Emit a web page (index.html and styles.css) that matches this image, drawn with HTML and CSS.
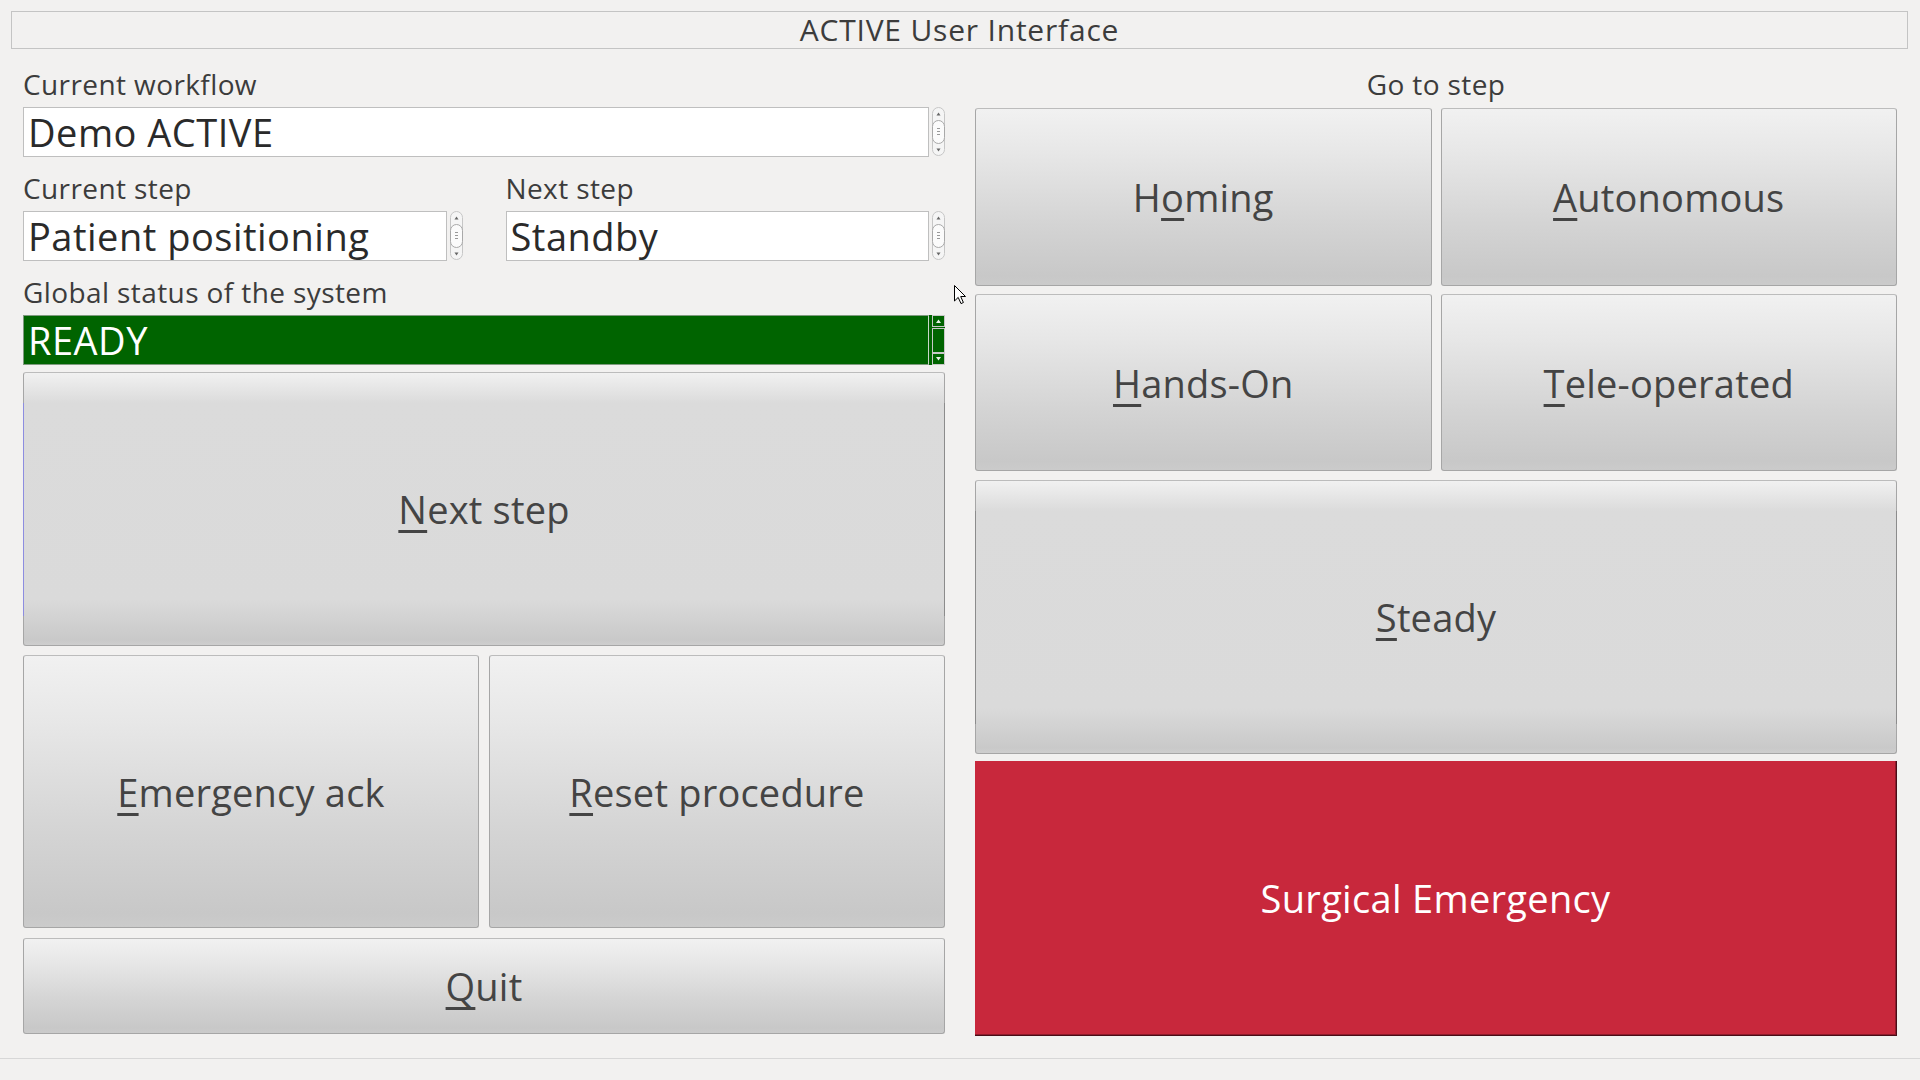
FILE: index.html
```html
<!DOCTYPE html>
<html lang="en">
<head>
<meta charset="utf-8">
<title>ACTIVE User Interface</title>
<link rel="stylesheet" href="styles.css">
</head>
<body>
<div class="titlebar">ACTIVE User Interface</div>
<main class="content">
  <section class="col left">
    <div class="label">Current workflow</div>
    <div class="field-row">
      <div class="field">Demo ACTIVE</div>
      <svg class="spin" viewBox="0 0 13 50" width="13" height="50"><rect x="0.5" y="0.5" width="12" height="48" rx="6" fill="#f5f5f5" stroke="#c6c6c6"/><path d="M4.5 8.5 L6.5 5.5 L8.5 8.5Z" fill="#666"/><rect x="0.5" y="13.5" width="12" height="23" rx="6" fill="#fbfbfb" stroke="#a9a9a9"/><path d="M5 21.5h3M5 24.5h3M5 27.5h3" stroke="#999" stroke-width="1"/><path d="M4.5 41.5 L6.5 44.5 L8.5 41.5Z" fill="#666"/></svg>
    </div>
    <div class="pair">
      <div class="group">
        <div class="label">Current step</div>
        <div class="field-row">
          <div class="field">Patient positioning</div>
          <svg class="spin" viewBox="0 0 13 50" width="13" height="50"><rect x="0.5" y="0.5" width="12" height="48" rx="6" fill="#f5f5f5" stroke="#c6c6c6"/><path d="M4.5 8.5 L6.5 5.5 L8.5 8.5Z" fill="#666"/><rect x="0.5" y="13.5" width="12" height="23" rx="6" fill="#fbfbfb" stroke="#a9a9a9"/><path d="M5 21.5h3M5 24.5h3M5 27.5h3" stroke="#999" stroke-width="1"/><path d="M4.5 41.5 L6.5 44.5 L8.5 41.5Z" fill="#666"/></svg>
        </div>
      </div>
      <div class="group">
        <div class="label">Next step</div>
        <div class="field-row">
          <div class="field">Standby</div>
          <svg class="spin" viewBox="0 0 13 50" width="13" height="50"><rect x="0.5" y="0.5" width="12" height="48" rx="6" fill="#f5f5f5" stroke="#c6c6c6"/><path d="M4.5 8.5 L6.5 5.5 L8.5 8.5Z" fill="#666"/><rect x="0.5" y="13.5" width="12" height="23" rx="6" fill="#fbfbfb" stroke="#a9a9a9"/><path d="M5 21.5h3M5 24.5h3M5 27.5h3" stroke="#999" stroke-width="1"/><path d="M4.5 41.5 L6.5 44.5 L8.5 41.5Z" fill="#666"/></svg>
        </div>
      </div>
    </div>
    <div class="label gap-label">Global status of the system</div>
    <div class="field-row status-row">
      <div class="field status">READY</div>
      <svg class="spin" viewBox="0 0 13 50" width="13" height="50"><rect x="0.5" y="0.5" width="12" height="11" fill="#006400" stroke="#c8c8c8"/><path d="M4 8 L6.5 4.5 L9 8Z" fill="#e8f0e8"/><rect x="0.5" y="13.5" width="12" height="24" fill="#006400" stroke="#c8c8c8"/><rect x="0.5" y="38.5" width="12" height="11" fill="#006400" stroke="#c8c8c8"/><path d="M4 42 L6.5 45.5 L9 42Z" fill="#e8f0e8"/></svg>
    </div>
    <button class="btn flat focus next"><span><u>N</u>ext step</span></button>
    <div class="btn-row">
      <button class="btn"><span><u>E</u>mergency ack</span></button>
      <button class="btn"><span><u>R</u>eset procedure</span></button>
    </div>
    <button class="btn quit"><span><u>Q</u>uit</span></button>
  </section>
  <section class="col right">
    <div class="label center">Go to step</div>
    <div class="step-grid">
      <button class="btn"><span>H<u>o</u>ming</span></button>
      <button class="btn"><span><u>A</u>utonomous</span></button>
      <button class="btn"><span><u>H</u>ands-On</span></button>
      <button class="btn"><span><u>T</u>ele-operated</span></button>
    </div>
    <button class="btn flat steady"><span><u>S</u>teady</span></button>
    <button class="btn emergency"><span>Surgical Emergency</span></button>
  </section>
</main>
<footer class="statusbar"></footer>
<svg class="cursor" viewBox="0 0 13 20" width="13" height="20"><path d="M0.5 0.5 L0.5 16 L4.2 12.4 L7 18.6 L9.4 17.5 L6.7 11.5 L11.5 11.5 Z" fill="#fff" stroke="#000" stroke-width="1" stroke-linejoin="round"/></svg>
</body>
</html>
```

FILE: styles.css
```css
html, body {
  margin: 0;
  padding: 0;
}

body {
  width: 1920px;
  height: 1080px;
  overflow: hidden;
  position: relative;
  background: #f2f1f0;
  font-family: "Open Sans", "Noto Sans", sans-serif;
  color: #3c3c3c;
}

.titlebar {
  margin: 11px 12px 0 11px;
  height: 36px;
  border: 1px solid #c4c4c4;
  text-align: center;
  font-size: 30px;
  line-height: 36px;
  letter-spacing: 0.8px;
  white-space: nowrap;
}

.content {
  box-sizing: border-box;
  height: 1009px;
  padding: 16px 23px 0;
  display: flex;
  gap: 30px;
}

.col {
  width: 922px;
  flex: none;
  display: flex;
  flex-direction: column;
}

.label {
  font-size: 28px;
  line-height: 38px;
  height: 38px;
  letter-spacing: 0.4px;
  white-space: nowrap;
  color: #3c3c3c;
}

.label.center {
  text-align: center;
  height: 35px;
}

.gap-label {
  margin-top: 12px;
}

.field-row {
  display: flex;
  gap: 3px;
  margin-top: 4px;
  height: 50px;
}

.field {
  flex: 1;
  min-width: 0;
  box-sizing: border-box;
  height: 50px;
  border: 1px solid #bfbfbf;
  background: #ffffff;
  font-size: 38px;
  line-height: 47px;
  padding: 1px 4px 0;
  letter-spacing: 0.5px;
  color: #2a2a2a;
  white-space: nowrap;
  overflow: hidden;
}

.spin {
  flex: none;
  display: block;
}

.pair {
  display: grid;
  grid-template-columns: 1fr 1fr;
  column-gap: 43px;
  margin-top: 12px;
}

.status-row {
  background: #006400;
}

.field.status {
  background: #006400;
  color: #ffffff;
  border: 1px solid #7f9a7f;
  border-right-color: #c8d8c8;
}

.btn {
  box-sizing: border-box;
  margin: 0;
  padding: 0;
  border: 1px solid #a6a6a6;
  border-top-color: #bcbcbc;
  border-radius: 3px;
  background: linear-gradient(to bottom, #f1f1f1 0%, #e7e7e7 25%, #d4d4d4 65%, #c8c8c8 95%, #cbcbcb 100%);
  font-family: "Open Sans", "Noto Sans", sans-serif;
  font-size: 38px;
  letter-spacing: 0.2px;
  color: #444444;
  display: flex;
  align-items: center;
  justify-content: center;
  position: relative;
  white-space: nowrap;
}

.btn u {
  text-decoration-thickness: 3px;
  text-underline-offset: 6px;
}

.btn.flat {
  background: linear-gradient(to bottom, #f1f1f1 0, #dbdbdb 30px, #dadada calc(100% - 45px), #c9c9c9 calc(100% - 5px), #cecece 100%);
}

.btn.flat::before,
.btn.flat::after {
  content: "";
  position: absolute;
  top: 30px;
  bottom: 29px;
  width: 1px;
  background: #8c8c8c;
}

.btn.flat::before {
  left: -1px;
}

.btn.flat::after {
  right: -1px;
}

.btn.focus::before {
  background: #8d8de0;
}

.next {
  height: 274px;
  margin-top: 7px;
}

.btn-row {
  display: grid;
  grid-template-columns: 1fr 1fr;
  column-gap: 10px;
  margin-top: 9px;
  height: 273px;
}

.quit {
  height: 96px;
  margin-top: 10px;
}

.step-grid {
  display: grid;
  grid-template-columns: 1fr 1fr;
  grid-template-rows: 178px 177px;
  column-gap: 9px;
  row-gap: 8px;
  margin-top: 8px;
}

.steady {
  height: 274px;
  margin-top: 9px;
}

.emergency {
  height: 275px;
  margin-top: 7px;
  border-radius: 0;
  border: none;
  border-right: 1px solid #4a0d17;
  border-bottom: 1px solid #4a0d17;
  box-shadow: inset -1px -1px 0 #8e1c2c;
  background: #c8283c;
  color: #ffffff;
  letter-spacing: 0.3px;
}

.statusbar {
  height: 21px;
  border-top: 1px solid #d7d7d7;
}

.cursor {
  position: absolute;
  left: 954px;
  top: 285px;
}
```
